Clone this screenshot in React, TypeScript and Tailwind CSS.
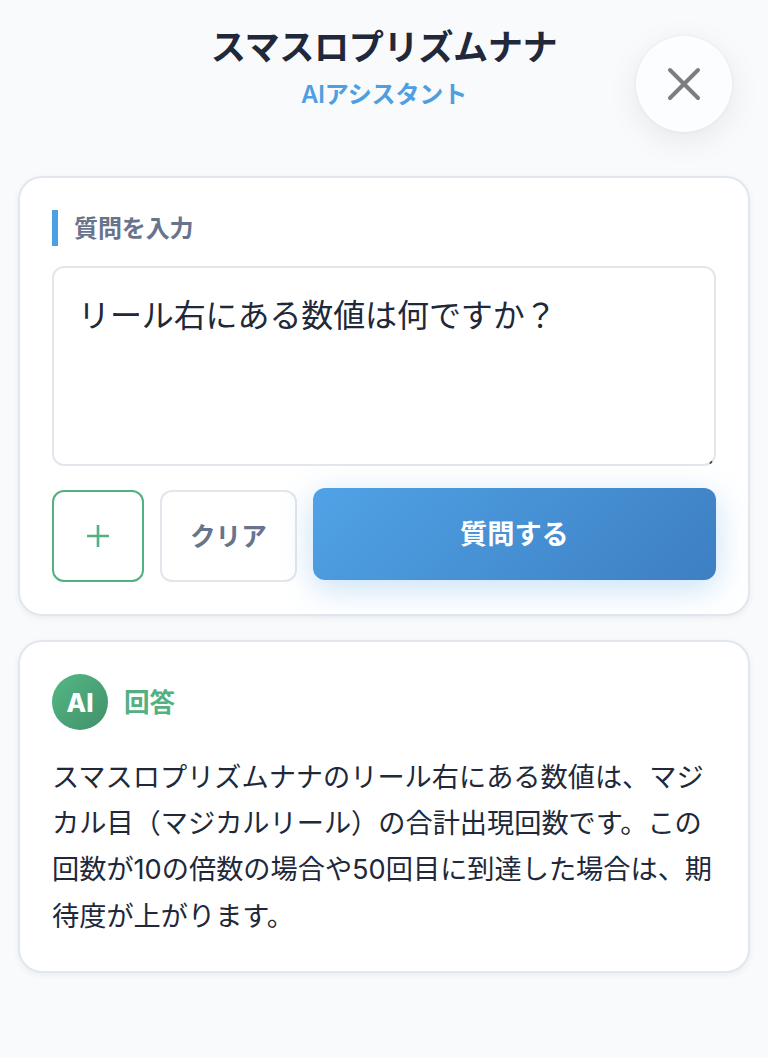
import React, { useState } from 'react';

const ANSWER =
  'スマスロプリズムナナのリール右にある数値は、マジカル目（マジカルリール）の合計出現回数です。この回数が10の倍数の場合や50回目に到達した場合は、期待度が上がります。';

export default function App() {
  const [question, setQuestion] = useState('リール右にある数値は何ですか？');

  return (
    <div className="relative flex min-h-screen w-full flex-col overflow-hidden bg-[#f8fafc] px-[18px] font-['Inter','Noto_Sans_CJK_JP',sans-serif] text-[#202839]">
      <header className="flex h-[176px] flex-col items-center pt-[21px]">
        <h1 className="text-[35.2px] leading-[52px] font-bold tracking-[-0.012em]">スマスロプリズムナナ</h1>
        <p className="mt-1 text-2xl leading-9 font-semibold tracking-[-0.005em] text-[#4f9fe0]">AIアシスタント</p>
      </header>

      <CloseButton />

      <main className="flex flex-col gap-6">
        <Card>
          <label
            htmlFor="question"
            className="mb-5 block border-l-[6px] border-[#4a9fe5] pt-0.5 pl-4 text-2xl leading-[34px] font-semibold tracking-[-0.005em] text-[#68748c]"
          >
            質問を入力
          </label>

          <div className="relative mb-6 h-[200px]">
            <textarea
              id="question"
              value={question}
              onChange={(e) => setQuestion(e.target.value)}
              className="block h-full w-full resize-none rounded-xl border-2 border-[#e2e6ed] bg-white px-6 py-[22px] text-[32px] leading-[52px] tracking-[-0.1px] outline-none"
            />
            <svg className="absolute right-[3px] bottom-[2px]" width="4" height="4" viewBox="0 0 4 4">
              <path d="M0.8 3.6 L3 1.4" stroke="#3b3f45" strokeWidth="1.6" />
            </svg>
          </div>

          <div className="flex items-center gap-4">
            <button className="flex h-[92px] w-[92px] items-center justify-center rounded-xl border-2 border-[#52b081] bg-white text-[#52b081]">
              <svg width="22" height="22" viewBox="0 0 22 22" fill="none">
                <path d="M11 0V22M0 11H22" stroke="currentColor" strokeWidth="2.6" />
              </svg>
            </button>
            <button
              onClick={() => setQuestion('')}
              className="h-[92px] rounded-xl border-2 border-[#e2e6ed] bg-white px-7 pt-0.5 text-[25.6px] font-semibold text-[#68748c]"
            >
              クリア
            </button>
            <button className="h-[92px] flex-1 -translate-y-0.5 rounded-xl bg-[linear-gradient(135deg,#50a2e6,#3d7fc2)] pt-0.5 text-[27.2px] font-bold text-white shadow-[0_8px_32px_rgba(66,153,225,0.3)]">
              質問する
            </button>
          </div>
        </Card>

        <Card>
          <div className="mb-6 flex items-center gap-4">
            <div className="flex h-14 w-14 items-center justify-center rounded-full bg-[linear-gradient(135deg,#55b785,#40916a)] pt-0.5 text-[25.6px] font-extrabold text-white">
              AI
            </div>
            <span className="pt-0.5 text-[25.6px] leading-none font-semibold text-[#52b081]">回答</span>
          </div>
          <p className="-mb-px pt-px text-[27.2px] leading-[46.24px]">{ANSWER}</p>
        </Card>
      </main>
    </div>
  );
}

function Card({ children }: { children: React.ReactNode }) {
  return (
    <section className="rounded-3xl border-2 border-[#e2e7ee] bg-white p-8 shadow-[0_2px_6px_rgba(0,0,0,0.06)]">
      {children}
    </section>
  );
}

function CloseButton() {
  return (
    <button
      aria-label="閉じる"
      className="absolute top-9 right-9 flex h-24 w-24 items-center justify-center rounded-full bg-[#fcfdfe] shadow-[0_0_0_2px_rgba(0,0,0,0.015),0_8px_32px_rgba(0,0,0,0.08)]"
    >
      <svg width="36" height="36" viewBox="0 0 36 36" fill="none">
        <path d="M4 4L32 32M32 4L4 32" stroke="#7c7d7e" strokeWidth="4" strokeLinecap="round" />
      </svg>
    </button>
  );
}
